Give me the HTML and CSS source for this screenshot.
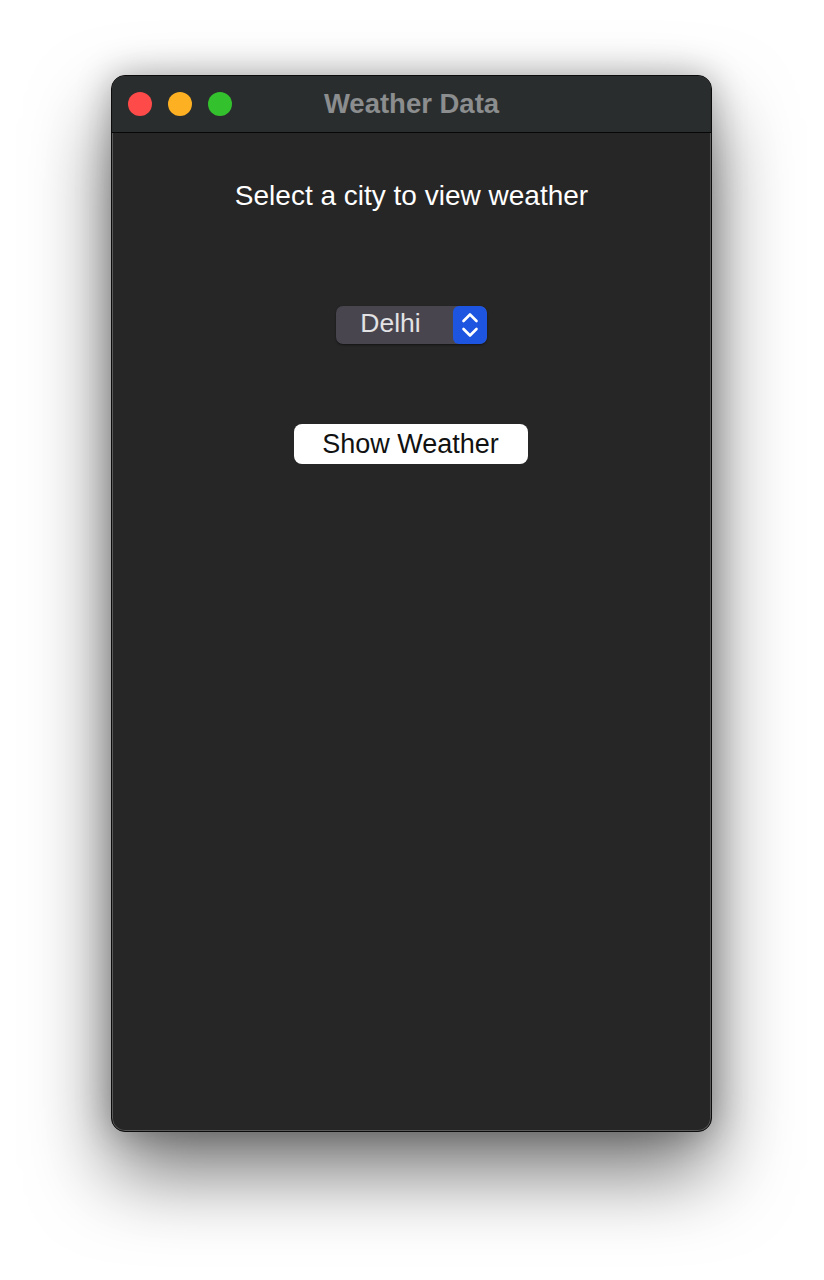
FILE: index.html
```html
<!DOCTYPE html>
<html>
<head>
<meta charset="utf-8">
<link rel="stylesheet" href="styles.css">
</head>
<body>
<div class="window">
  <div class="titlebar">
    <div class="lights">
      <span class="light red"></span>
      <span class="light yellow"></span>
      <span class="light green"></span>
    </div>
    <div class="title">Weather Data</div>
  </div>
  <div class="content">
    <div class="prompt">Select a city to view weather</div>
    <div class="popup">
      <span class="popup-label">Delhi</span>
      <span class="popup-arrows">
        <svg width="20" height="30" viewBox="0 0 20 30">
          <path d="M3.5 11 L10 4.5 L16.5 11" fill="none" stroke="#fff" stroke-width="2.6" stroke-linecap="round" stroke-linejoin="round"/>
          <path d="M3.5 19 L10 25.5 L16.5 19" fill="none" stroke="#fff" stroke-width="2.6" stroke-linecap="round" stroke-linejoin="round"/>
        </svg>
      </span>
    </div>
    <button class="show-btn">Show Weather</button>
  </div>
</div>
</body>
</html>
```
FILE: styles.css
```css
html, body {
  margin: 0;
  padding: 0;
  background: #ffffff;
}
body {
  width: 824px;
  height: 1280px;
  overflow: hidden;
  padding: 75px 0 0 111px;
  box-sizing: border-box;
  font-family: "Liberation Sans", Arial, sans-serif;
}
.window {
  width: 601px;
  height: 1057px;
  box-sizing: border-box;
  border: 1px solid #0c0c0c;
  border-radius: 14px;
  background: #262626;
  overflow: hidden;
  display: flex;
  flex-direction: column;
  box-shadow: inset 0 0 0 1px rgba(255,255,255,0.24), 0 40px 80px rgba(0,0,0,0.55), 0 0 34px rgba(0,0,0,0.28);
}
.titlebar {
  height: 56px;
  flex: none;
  background: #2a2d2e;
  border-bottom: 1px solid #070707;
  display: flex;
  align-items: center;
  position: relative;
}
.lights {
  display: flex;
  gap: 16px;
  padding-left: 16px;
}
.light {
  width: 24px;
  height: 24px;
  border-radius: 50%;
  display: block;
}
.red { background: #fe4a48; }
.yellow { background: #fdb022; }
.green { background: #33c12d; }
.title {
  position: absolute;
  left: 0;
  right: 0;
  top: 0;
  bottom: 0;
  display: flex;
  align-items: center;
  justify-content: center;
  font-weight: bold;
  font-size: 27.5px;
  color: #8b8d8e;
}
.content {
  flex: 1;
  display: flex;
  flex-direction: column;
  align-items: center;
}
.prompt {
  margin-top: 47px;
  font-size: 28px;
  line-height: 32px;
  color: #ffffff;
}
.popup {
  margin-top: 94px;
  width: 151px;
  height: 38px;
  box-sizing: border-box;
  border-radius: 7px;
  background: #48454f;
  box-shadow: 0 1px 2px rgba(0,0,0,0.5);
  display: flex;
  align-items: stretch;
  overflow: hidden;
}
.popup-label {
  flex: 1;
  display: flex;
  align-items: center;
  justify-content: center;
  padding-right: 8px;
  padding-bottom: 3px;
  font-size: 26.5px;
  color: #e2e2e4;
}
.popup-arrows {
  width: 34px;
  background: #1e55e0;
  border-radius: 6px;
  display: flex;
  align-items: center;
  justify-content: center;
}
.popup-arrows svg { display: block; }
.show-btn {
  margin-top: 80px;
  margin-right: 2px;
  width: 234px;
  height: 40px;
  border: none;
  border-radius: 8px;
  background: #ffffff;
  color: #111;
  font-family: "Liberation Sans", Arial, sans-serif;
  font-size: 27px;
  padding: 0;
}
```
